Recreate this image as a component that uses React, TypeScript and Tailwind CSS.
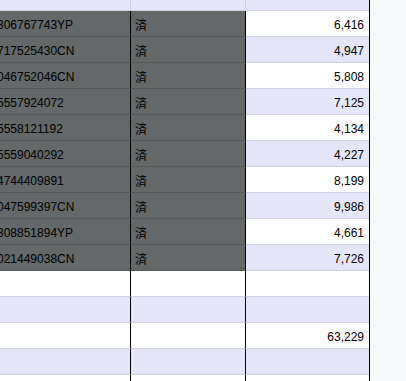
import React from "react";

const rows = [
  ["306767743YP", "6,416"],
  ["717525430CN", "4,947"],
  ["046752046CN", "5,808"],
  ["5557924072", "7,125"],
  ["5558121192", "4,134"],
  ["5559040292", "4,227"],
  ["4744409891", "8,199"],
  ["047599397CN", "9,986"],
  ["308851894YP", "4,661"],
  ["021449038CN", "7,726"],
];

const tail = ["", "", "63,229", "", ""];

export default function App() {
  return (
    <div className="w-[406px] h-[381px] flex bg-[#f8f9fb] overflow-hidden text-[12px] text-black font-['Liberation_Sans',_Arial,_sans-serif]">
      <div className="w-[370px] h-[381px] shrink-0 border-r border-black flex flex-col overflow-hidden">
        {/* partial top row */}
        <div className="flex h-[11px] shrink-0 bg-[#e6e6fa]">
          <div className="w-[131px] border-r border-b border-[#d0d0e2]" />
          <div className="w-[115px] border-r border-b border-[#d0d0e2]" />
          <div className="flex-1 border-b border-[#d0d0e2]" />
        </div>
        {rows.map(([id, num], i) => (
          <div key={i} className="flex h-[26px] shrink-0">
            <div className="w-[131px] border-r border-r-black border-b border-b-[#55595c] bg-[#646869] flex items-center overflow-hidden whitespace-nowrap">
              <span className="ml-[-3px] pt-[2px]">{id}</span>
            </div>
            <div className="w-[115px] border-r border-r-black border-b border-b-[#55595c] bg-[#646869] flex items-center pl-[4px] pt-[2px] font-['Noto_Sans_CJK_JP',_sans-serif] text-[12px]">
              済
            </div>
            <div
              className={
                "flex-1 border-b border-[#d0d0e2] flex items-center justify-end pr-[5px] pt-[2px] " +
                (i % 2 === 0 ? "bg-white" : "bg-[#e6e6fa]")
              }
            >
              {num}
            </div>
          </div>
        ))}
        {tail.map((num, i) => (
          <div
            key={"t" + i}
            className={
              "flex h-[26px] shrink-0 " + (i % 2 === 0 ? "bg-white" : "bg-[#e6e6fa]")
            }
          >
            <div className="w-[131px] border-r border-r-black border-b border-b-[#d0d0e2]" />
            <div className="w-[115px] border-r border-r-black border-b border-b-[#d0d0e2]" />
            <div className="flex-1 border-b border-[#d0d0e2] flex items-center justify-end pr-[5px] pt-[2px]">
              {num}
            </div>
          </div>
        ))}
      </div>
      <div className="flex-1" />
    </div>
  );
}
